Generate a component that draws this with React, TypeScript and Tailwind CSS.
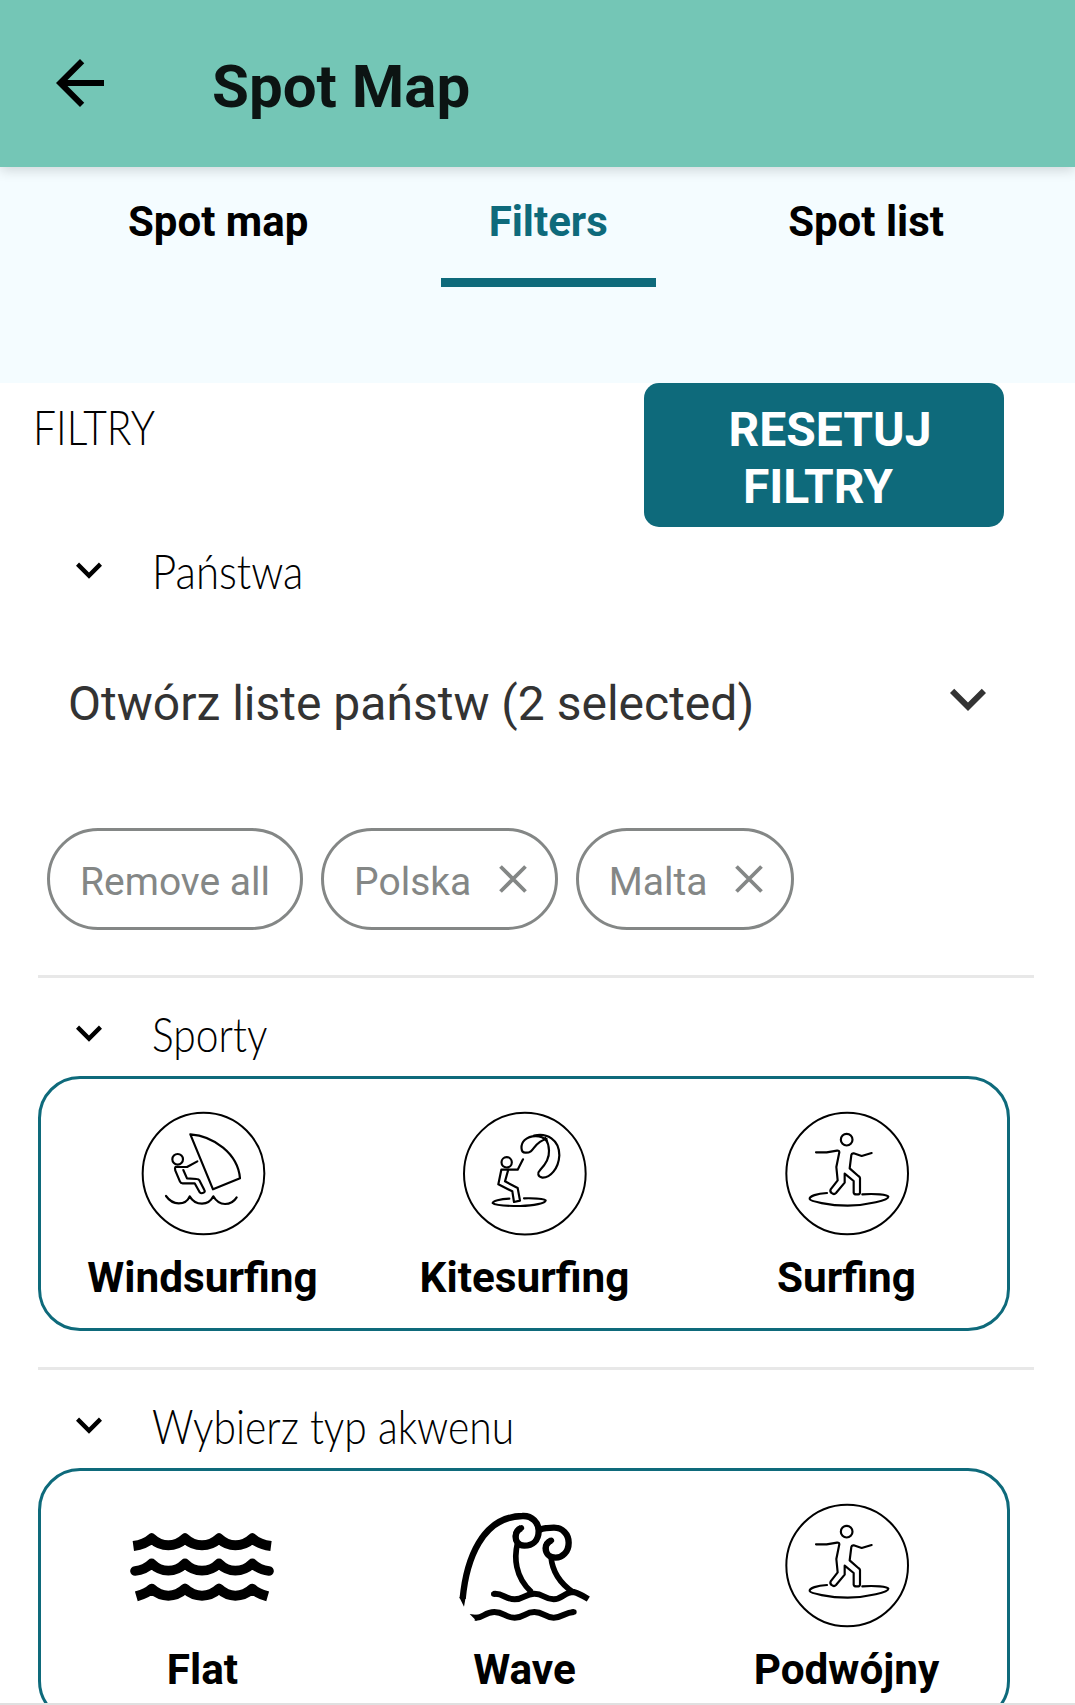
import type { ReactNode } from 'react';

function ExpandIcon({ className }: { className: string }) {
  return (
    <svg viewBox="0 0 24 24" className={className} fill="currentColor">
      <path d="M16.59 8.59L12 13.17 7.41 8.59 6 10l6 6 6-6z" />
    </svg>
  );
}

function WindsurfIcon() {
  return (
    <svg viewBox="27 30 378 378" className="h-[126px] w-[126px] overflow-visible" fill="none" stroke="#000" strokeWidth="6.5" strokeLinejoin="round" strokeLinecap="round">
      <circle cx="220.5" cy="220.5" r="182.5" strokeWidth="6" />
      <circle cx="143" cy="178" r="16" />
      <path d="M181 103C250 108 324 160 330 235L249 268Z" />
      <path d="M202 184L171 201H136Q134 204 136 212L150 245Q152 250 158 250H194L209 277Q214 282 221 278Q226 275 223 270L208 241Q206 237 200 237L171 235L160 210" />
      <path d="M108 288C118 302 130 310 146 310C162 310 173 304 179 289C188 304 202 311 216 311C232 311 243 303 250 289C258 303 270 312 285 312C300 312 312 305 320 292" />
    </svg>
  );
}

function KitesurfIcon() {
  return (
    <svg viewBox="33 30 378 378" className="h-[126px] w-[126px] overflow-visible" fill="none" stroke="#000" strokeWidth="6.5" strokeLinejoin="round" strokeLinecap="round">
      <circle cx="224.5" cy="221" r="182.5" strokeWidth="6" />
      <circle cx="170" cy="187" r="15.5" />
      <path d="M219 178L203 209H154L145 253L187 274L192 306L210 302L203 264L165 244L174 212" />
      <path d="M178 296C150 297 128 303 128 309C134 315 175 318 211 318C252 317 286 310 287 301C284 297 255 294 222 295" />
      <path d="M290 122C272 102 240 106 224 120C210 134 212 158 226 158C256 160 248 126 290 117" />
      <path d="M252 107C290 98 328 118 328 166C326 206 300 234 277 233C263 230 261 219 271 209C290 190 298 172 297 152C297 136 294 128 286 114" />
    </svg>
  );
}

function SurfIcon() {
  return (
    <svg viewBox="24 30 378 378" className="h-[126px] w-[126px] overflow-visible" fill="none" stroke="#000" strokeWidth="6.5" strokeLinejoin="round" strokeLinecap="round">
      <circle cx="216.5" cy="220.5" r="182.5" strokeWidth="6" />
      <circle cx="215" cy="119" r="17.5" />
      <path d="M123 157H155L186 152Q193 151 193 157L184 201L188 241L167 268Q164 275 170 279Q177 285 183 279L209 248V221L236 243V278Q237 283 244 283H250Q255 283 255 277V234Q254 230 250 228L224 205L229 165Q230 159 236 160L260 168L290 159" />
      <path d="M156 279C126 281 103 288 104 297C106 303 160 317 218 317C280 316 340 300 340 290C338 284 300 280 262 283" />
    </svg>
  );
}

function FlatIcon() {
  return (
    <svg viewBox="21 6 450 378" className="h-[126px] w-[150px]" fill="none" stroke="#000" strokeWidth="30" strokeLinejoin="round">
      <path d="M40 138C62 135 80 129 95 115C110 129 127 136 145 136C164 136 180 129 195 115C210 129 227 136 246 136C264 136 282 129 297 115C312 129 328 136 346 136C364 136 382 129 397 115C412 129 430 135 453 138" />
      <path strokeLinecap="round" strokeWidth="29" d="M45 213C64 211 80 205 95 190C110 205 127 212 145 212C164 212 180 205 195 190C210 205 227 212 246 212C264 212 282 205 297 190C312 205 328 212 346 212C364 212 382 205 397 190C412 205 428 211 447 213" />
      <path d="M49 289C66 284 81 280 95 266C110 280 127 287 145 287C164 287 180 280 195 266C210 280 227 287 246 287C264 287 282 280 297 266C312 280 328 287 346 287C364 287 382 280 397 266C411 280 426 284 443 289" />
    </svg>
  );
}

function WaveIcon() {
  return (
    <svg viewBox="12 6 450 378" className="h-[126px] w-[150px]" fill="none" stroke="#000" strokeWidth="19" strokeLinejoin="round">
      <path d="M53 296C64 180 110 50 232 48C262 46 281 70 281 92C281 122 262 137 238 137C218 137 211 121 212 108C213 94 220 88 229 84" />
      <path strokeLinecap="round" strokeWidth="17" d="M229 84C218 89 212 96 212 108" />
      <path d="M284 89C300 83 312 83 327 83C352 83 371 102 371 128C371 156 352 173 332 173C311 173 302 158 302 145C302 133 308 126 319 121" />
      <path strokeLinecap="round" strokeWidth="17" d="M319 121C308 126 302 133 302 145" />
      <path strokeWidth="17" d="M217 132C208 170 208 230 260 277" />
      <path strokeWidth="17" d="M318 170C322 215 345 250 385 277" />
      <path strokeWidth="18" d="M145 282C172 278 182 298 209 298C236 298 240 281 268 281C296 281 298 298 326 298C352 298 358 276 386 276C402 280 415 288 430 297" />
      <path strokeLinecap="round" strokeWidth="16" d="M146 282H149M387 336H384" />
      <path strokeWidth="18" d="M90 353C114 356 118 336 148 336C178 336 180 353 209 353C238 353 240 336 268 336C296 336 300 353 326 353C352 353 358 337 387 336" />
      <path fill="#000" stroke="none" d="M43 292L57 320L62 292ZM74 342L94 362L104 346Z" />
    </svg>
  );
}

function Chip({ label, removable }: { label: string; removable?: boolean }) {
  return (
    <button className="flex h-[102px] items-center rounded-full border-[3px] border-[#848786] px-[30px] text-[39px] leading-[46px] text-[#848786]">
      <span className="pt-[6px]">{label}</span>
      {removable && (
        <svg viewBox="0 0 28 28" className="-mr-[2px] ml-[27.5px] h-[28px] w-[28px]" fill="none" stroke="currentColor" strokeWidth="3.8">
          <path d="M1.5 1.5L26.5 26.5M26.5 1.5L1.5 26.5" />
        </svg>
      )}
    </button>
  );
}

function SectionHeader({ title, stretch = 'scale-x-[0.85]' }: { title: string; stretch?: string }) {
  return (
    <div className="flex items-start pl-[25px]">
      <ExpandIcon className="mt-[29px] h-[52px] w-[52px]" />
      <span className={`mt-[26px] ml-[37px] origin-left font-['Lato',sans-serif] text-[48px] leading-[60px] font-light whitespace-nowrap ${stretch}`}>
        {title}
      </span>
    </div>
  );
}

function Option({ icon, label }: { icon: ReactNode; label: string }) {
  return (
    <div className="flex flex-col items-center">
      {icon}
      <span className="mt-[17px] pl-px text-[42.3px] leading-[50px] font-bold">{label}</span>
    </div>
  );
}

function Section({ title, children }: { title: string; children: ReactNode }) {
  return (
    <section className="mr-[41px] ml-[38px] h-[392px] border-t-[3px] border-[#e8e8e8]">
      <div className="h-[98px]">
        <SectionHeader title={title} />
      </div>
      <div className="mr-[24px] grid h-[255px] grid-cols-3 rounded-[42px] border-[3px] border-[#0e6a7b] pt-[31px]">
        {children}
      </div>
    </section>
  );
}

export default function App() {
  return (
    <div className="flex h-[1705px] w-[1075px] flex-col overflow-hidden bg-white font-['Roboto',sans-serif] text-black">
      <header className="relative flex h-[167px] shrink-0 items-start bg-[#74c6b6] pl-[44px] shadow-[0_3px_12px_rgba(0,0,0,0.16)]">
        <svg viewBox="0 0 24 24" className="mt-[47px] h-[72px] w-[72px]" fill="currentColor">
          <path d="M20 11H7.830l5.590-5.590L12 4l-8 8 8 8 1.410-1.410L7.830 13H20v-2z" />
        </svg>
        <h1 className="mt-[51px] ml-[96px] text-[60px] leading-[72px] font-bold text-[#0c1413]">Spot Map</h1>
      </header>

      <nav className="flex h-[216px] shrink-0 items-start justify-between bg-[#f4fcff] pt-[30px] pr-[83px] pl-[80px] text-[42px] leading-[50px] font-bold">
        <button className="px-[48px]">Spot map</button>
        <button className="border-b-[9px] border-[#0e6a7b] px-[48px] pb-[31px] text-[#0e6a7b]">Filters</button>
        <button className="px-[48px]">Spot list</button>
      </nav>

      <main className="min-h-0 flex-1 overflow-hidden">
        <div className="flex h-[144px] items-start justify-between pr-[71px] pl-[33px]">
          <h2 className="mt-[14px] origin-left scale-x-[0.85] font-['Lato',sans-serif] text-[48px] leading-[60px] font-light">FILTRY</h2>
          <button className="h-[144px] w-[360px] rounded-[15px] bg-[#0e6a7b] pt-[18px] pb-[12px] text-center text-[48px] leading-[57px] font-bold text-white">
            <span className="block">{'\u00a0RESETUJ'}</span>
            <span className="block">{'FILTRY\u00a0'}</span>
          </button>
        </div>

        <div className="-mt-[12px] mr-[41px] ml-[38px] h-[110px]">
          <SectionHeader title="Państwa" stretch="scale-x-[0.875]" />
        </div>
        <div className="flex h-[203px] items-start justify-between pr-[71px] pl-[68px] text-[#333]">
          <span className="mt-[50px] text-[48px] leading-[57px]">Otwórz liste państw (2 selected)</span>
          <ExpandIcon className="mt-[38px] h-[72px] w-[72px]" />
        </div>
        <div className="flex h-[147px] items-start gap-[18px] pl-[47px]">
          <Chip label="Remove all" />
          <Chip label="Polska" removable />
          <Chip label="Malta" removable />
        </div>

        <Section title="Sporty">
          <Option icon={<WindsurfIcon />} label="Windsurfing" />
          <Option icon={<KitesurfIcon />} label="Kitesurfing" />
          <Option icon={<SurfIcon />} label="Surfing" />
        </Section>
        <Section title="Wybierz typ akwenu">
          <Option icon={<FlatIcon />} label="Flat" />
          <Option icon={<WaveIcon />} label="Wave" />
          <Option icon={<SurfIcon />} label="Podwójny" />
        </Section>
      </main>
      <footer className="h-[2px] shrink-0 bg-[#e0e0e0]" />
    </div>
  );
}
